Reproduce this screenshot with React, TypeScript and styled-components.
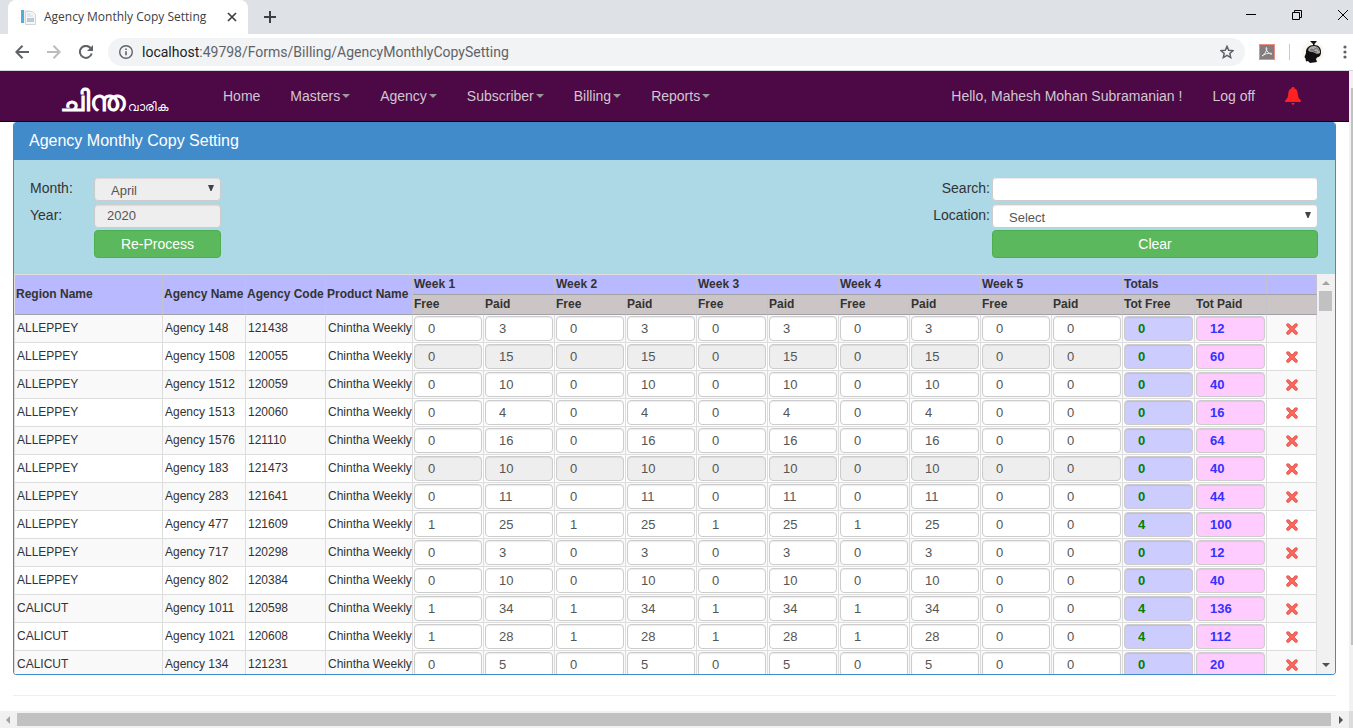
import React from "react";
import styled, { createGlobalStyle, css } from "styled-components";

const GlobalStyle = createGlobalStyle`
  *, *::before, *::after { box-sizing: border-box; }
  body { margin: 0; background: #fff; color: #333; font-family: "Liberation Sans", Arial, sans-serif; font-size: 14px; line-height: 20px; }
  button, input, select { font-family: inherit; margin: 0; }
  a { color: inherit; text-decoration: none; }
  svg { display: block; }
`;

const Window = styled.div`
  display: flex;
  flex-direction: column;
  min-height: 100vh;
`;

/* ---------- browser frame ---------- */

const TabStrip = styled.div`
  display: flex;
  height: 34px;
  padding-left: 8px;
  background: #dee1e6;
`;

const Tab = styled.div`
  display: flex;
  align-items: center;
  width: 240px;
  padding: 0 10px 0 12px;
  border-radius: 8px 8px 0 0;
  background: #fff;
  color: #3c4043;
  font: 12px/16px "Open Sans", "Noto Sans", sans-serif;
`;

const TabTitle = styled.span`
  flex: 1;
  padding-left: 8px;
  white-space: nowrap;
`;

const IconButton = styled.button<{ $w?: number }>`
  display: flex;
  align-items: center;
  justify-content: center;
  flex: none;
  width: ${(p) => p.$w ?? 32}px;
  padding: 0;
  border: 0;
  background: none;
`;

const WindowControls = styled.div`
  display: flex;
  margin-left: auto;
  padding-bottom: 4px;
`;

const CloseButton = styled(IconButton)`
  width: 33px;
  padding-left: 13px;
`;

const MenuButton = styled(IconButton)`
  width: 17px;
  margin-left: 12px;
`;

const Toolbar = styled.div`
  display: flex;
  align-items: center;
  height: 37px;
  padding-left: 6px;
  border-bottom: 1px solid #d5d7da;
  background: #fff;
`;

const AddressBar = styled.div`
  display: flex;
  flex: 1;
  align-items: center;
  height: 28px;
  margin-left: 6px;
  padding: 0 2px 0 10px;
  border-radius: 14px;
  background: #f1f3f4;
`;

const Url = styled.div`
  flex: 1;
  padding-left: 8px;
  color: #5f6368;
  font: 14px/20px Roboto, "Open Sans", sans-serif;
  white-space: nowrap;
  b { color: #202124; font-weight: 400; }
`;

const Extensions = styled.div`
  display: flex;
  align-items: center;
  padding-left: 14px;
`;

const Divider = styled.span`
  width: 1px;
  height: 16px;
  margin: 0 12px 0 14px;
  background: #ccc;
`;

/* ---------- page ---------- */

const Viewport = styled.div`
  display: flex;
  flex: 1;
`;

const Page = styled.div`
  flex: 1;
  min-width: 0;
`;

const Navbar = styled.nav`
  display: flex;
  align-items: center;
  height: 51px;
  padding: 0 33px 0 60px;
  border-bottom: 1px solid #000;
  background: #4d0846;
  color: #d2c6d0;
`;

const Brand = styled.a`
  display: flex;
  align-items: baseline;
  gap: 3px;
  width: 148px;
  padding-top: 16px;
  color: #fff;
  font-size: 12px;
  line-height: 28px;
  white-space: nowrap;
  strong { font-size: 28px; }
`;

const NavLink = styled.a`
  display: flex;
  align-items: center;
  padding: 0 15px;
  white-space: nowrap;
`;

const Caret = styled.span`
  margin-left: 2px;
  border: 4px solid transparent;
  border-top-color: #999;
  border-bottom: 0;
`;

const NavRight = styled.div`
  display: flex;
  align-items: center;
  margin-left: auto;
`;

const Main = styled.main`
  padding: 0 13px;
`;

const Panel = styled.section`
  overflow: hidden;
  border: 1px solid #428bca;
  border-top: 0;
  border-radius: 4px;
  background: #add8e6;
`;

const PanelTitle = styled.h1`
  margin: 0;
  height: 38px;
  padding: 9px 15px;
  background: #428bca;
  color: #fff;
  font-size: 16px;
  font-weight: 400;
  line-height: 20px;
`;

const Filters = styled.form`
  display: flex;
  justify-content: space-between;
  padding: 16px 17px 16px 16px;
`;

const FieldGrid = styled.div<{ $label: number; $field: number; $right?: boolean }>`
  display: grid;
  grid-template-columns: ${(p) => p.$label}px ${(p) => p.$field}px;
  grid-template-rows: 27px 27px 28px;
  ${(p) => p.$right && css`
    label { text-align: right; padding-right: 2px; }
  `}
`;

const Label = styled.label`
  padding-top: 2px;
`;

const field = css`
  display: block;
  width: 100%;
  height: 24px;
  border: 1px solid #ccc;
  border-radius: 4px;
  background: #fff;
  color: #555;
  font-size: 13px;
  line-height: 16px;
  box-shadow: inset 0 1px 1px rgba(0, 0, 0, 0.08);
  &:disabled { background: #eee; opacity: 1; }
`;

const TextInput = styled.input`
  ${field}
  margin-top: 1px;
  padding: 0 12px 2px;
`;

const SelectWrap = styled.div`
  position: relative;
  padding-top: 1px;
  svg { position: absolute; right: 7px; top: 9px; }
`;

const Select = styled.select`
  ${field}
  appearance: none;
  padding: 4px 12px 0 16px;
`;

const GreenButton = styled.button`
  grid-column: 2;
  height: 28px;
  padding: 0;
  border: 1px solid #4cae4c;
  border-radius: 4px;
  background: #5cb85c;
  color: #fff;
  font-size: 14px;
`;

const GridArea = styled.div`
  display: flex;
  height: 400px;
  background: #fff;
`;

const GridClip = styled.div`
  flex: 1;
  min-width: 0;
  padding-right: 1px;
  overflow: hidden;
  background: #f1f1f1;
`;

const Table = styled.table`
  width: 100%;
  table-layout: fixed;
  border-collapse: separate;
  border-spacing: 0;
  border-top: 1px solid #ddd;
  border-left: 1px solid #ddd;
  background: #fff;
  font-size: 12px;
  line-height: 16px;
`;

const HeadCell = styled.th<{ $sub?: boolean }>`
  height: 20px;
  padding: 0 1px 2px;
  border-right: 1px solid #c4c2cc;
  border-bottom: 1px solid #a3a1a8;
  background: ${(p) => (p.$sub ? "#cbc5c5" : "#b9b9ff")};
  text-align: left;
  white-space: nowrap;
`;

const Row = styled.tr`
  &:nth-child(odd) { background: #f9f9f9; }
`;

const Cell = styled.td<{ $text?: boolean }>`
  height: 28px;
  padding: ${(p) => (p.$text ? "0 0 1px 2px" : "1px")};
  border-right: 1px solid #ddd;
  border-bottom: 1px solid #ddd;
  white-space: nowrap;
`;

const tones = {
  plain: css``,
  free: css`background: #ccf; color: #008000; font-weight: 700;`,
  paid: css`background: #fcf; color: #33f; font-weight: 700;`,
};

const CellInput = styled.input<{ $tone?: keyof typeof tones }>`
  ${field}
  height: 25px;
  padding: 0 13px;
  ${(p) => tones[p.$tone ?? "plain"]}
`;

const Rule = styled.hr`
  height: 1px;
  margin: 20px 0 15px;
  border: 0;
  background: #eee;
`;

/* ---------- scroll bars ---------- */

const GridScroll = styled.div`
  display: flex;
  flex-direction: column;
  align-items: center;
  width: 17px;
  padding: 7px 3px 7px 1px;
  background: #f1f1f1;
`;

const GridThumb = styled.div`
  width: 13px;
  height: 20px;
  margin: 6px 0 auto;
  background: #c1c1c1;
`;

const PageScroll = styled.div`
  width: 4px;
  padding: 17px 0 66px 2px;
  background: #f1f1f1;
`;

const PageThumb = styled.div`
  height: 100%;
  background: #c1c1c1;
`;

const BottomScroll = styled.div`
  display: flex;
  align-items: center;
  height: 17px;
  padding-left: 6px;
  background: #f1f1f1;
`;

const BottomThumb = styled.div`
  flex: 1;
  height: 13px;
  margin: 0 8px 0 7px;
  background: #c1c1c1;
`;

const Corner = styled.div`
  width: 4px;
  height: 17px;
  margin-left: 6px;
  background: #dcdcdc;
`;

const Tri = styled.span<{ $dir: "up" | "down" | "left" | "right"; $color: string }>`
  border: 4px solid transparent;
  ${(p) => p.$dir === "up" && css`border-top: 0; border-bottom-color: ${p.$color};`}
  ${(p) => p.$dir === "down" && css`border-bottom: 0; border-top-color: ${p.$color};`}
  ${(p) => p.$dir === "left" && css`border-left: 0; border-right-color: ${p.$color};`}
  ${(p) => p.$dir === "right" && css`border-right: 0; border-left-color: ${p.$color};`}
`;

/* ---------- drawings ---------- */

const Favicon = () => (
  <svg width="16" height="16" viewBox="0 0 16 16" aria-hidden="true">
    <path d="M1 1h3v13H1z" fill="#5aa9d6" />
    <path d="M4 1h6v13H4z" fill="#e9eef2" />
    <path d="M5.500 2.500h7l3 3v10h-10z" fill="#f3f5f7" stroke="#d0d5da" />
    <path d="M7 5h4M7 7h6" stroke="#d5dadf" />
    <path d="M7 9h7v4H7z" fill="#bcc8d2" />
  </svg>
);

const Bell = () => (
  <svg width="16" height="18" viewBox="0 0 16 18" fill="#ff2020" aria-hidden="true">
    <path d="M8 0c1 0 1.500.600 1.600 1.400C12 2.200 12.700 4.500 12.800 7c.1 3 .7 4.500 3 6.200V15H.2v-1.800C2.500 11.500 3.100 10 3.200 7c.1-2.500.8-4.800 3.200-5.600C6.500.600 7 0 8 0z" />
    <path d="M6.500 16h3c-.1 1.200-.7 1.800-1.500 1.800S6.600 17.200 6.500 16z" />
  </svg>
);

const Cross = () => (
  <svg width="12" height="12" viewBox="0 0 12 12" strokeLinecap="round" aria-hidden="true">
    <path d="M2 2l8 8M10 2l-8 8" stroke="#e4493f" strokeWidth="3.400" />
    <path d="M2 2l8 8M10 2l-8 8" stroke="#fa6a60" strokeWidth="1.800" />
  </svg>
);

const SelectArrow = () => (
  <svg width="6" height="6" viewBox="0 0 6 6" aria-hidden="true">
    <path d="M0 0h6L3.500 6h-1z" fill="#444" />
  </svg>
);

const Profile = () => (
  <svg width="22" height="24" viewBox="0 0 22 24" aria-hidden="true">
    <circle cx="11" cy="12" r="11" fill="#fbf6f0" />
    <path d="M8 1h7l-2.500 3v2h-1.500V4z" fill="#111" />
    <path d="M4 13c-.5-5 3-8 8-8s7.500 3.500 7 8c-.3 3-2 4-4 4.500L14 19l1 3-7 1-2-2-2 .5-.5-3L2.500 17z" fill="#111" />
    <path d="M6 10c1-3 3-4 6-4 4 0 6 3 6 7-2 1.500-4 .5-5 0-2-1.500-5 0-7-3z" fill="#aaa" />
    <path d="M8 10c2-2 3 1 5-1s3 0 4 2M9 11c2-1 3 1 6 1" fill="none" stroke="#666" />
  </svg>
);

/* ---------- data ---------- */

type Agency = { region: string; name: string; code: string; free: number; paid: number; locked?: boolean };

const agencies: Agency[] = [
  { region: "ALLEPPEY", name: "Agency 148", code: "121438", free: 0, paid: 3 },
  { region: "ALLEPPEY", name: "Agency 1508", code: "120055", free: 0, paid: 15, locked: true },
  { region: "ALLEPPEY", name: "Agency 1512", code: "120059", free: 0, paid: 10 },
  { region: "ALLEPPEY", name: "Agency 1513", code: "120060", free: 0, paid: 4 },
  { region: "ALLEPPEY", name: "Agency 1576", code: "121110", free: 0, paid: 16 },
  { region: "ALLEPPEY", name: "Agency 183", code: "121473", free: 0, paid: 10, locked: true },
  { region: "ALLEPPEY", name: "Agency 283", code: "121641", free: 0, paid: 11 },
  { region: "ALLEPPEY", name: "Agency 477", code: "121609", free: 1, paid: 25 },
  { region: "ALLEPPEY", name: "Agency 717", code: "120298", free: 0, paid: 3 },
  { region: "ALLEPPEY", name: "Agency 802", code: "120384", free: 0, paid: 10 },
  { region: "CALICUT", name: "Agency 1011", code: "120598", free: 1, paid: 34 },
  { region: "CALICUT", name: "Agency 1021", code: "120608", free: 1, paid: 28 },
  { region: "CALICUT", name: "Agency 134", code: "121231", free: 0, paid: 5 },
];

const weeks = [1, 2, 3, 4, 5];
const menus = ["Masters", "Agency", "Subscriber", "Billing", "Reports"];

const AgencyRow = ({ a }: { a: Agency }) => (
  <Row>
    <Cell $text>{a.region}</Cell>
    <Cell $text>{a.name}</Cell>
    <Cell $text>{a.code}</Cell>
    <Cell $text>Chintha Weekly</Cell>
    {weeks.map((w) => (
      <React.Fragment key={w}>
        <Cell>
          <CellInput aria-label={`${a.name} week ${w} free`} disabled={a.locked} defaultValue={w < 5 ? a.free : 0} />
        </Cell>
        <Cell>
          <CellInput aria-label={`${a.name} week ${w} paid`} disabled={a.locked} defaultValue={w < 5 ? a.paid : 0} />
        </Cell>
      </React.Fragment>
    ))}
    <Cell>
      <CellInput $tone="free" readOnly aria-label={`${a.name} total free`} value={a.free * 4} />
    </Cell>
    <Cell>
      <CellInput $tone="paid" readOnly aria-label={`${a.name} total paid`} value={a.paid * 4} />
    </Cell>
    <Cell>
      <IconButton type="button" $w={47} aria-label={`Delete ${a.name}`}>
        <Cross />
      </IconButton>
    </Cell>
  </Row>
);

export default function App() {
  return (
    <Window>
      <GlobalStyle />
      <TabStrip>
        <Tab>
          <Favicon />
          <TabTitle>Agency Monthly Copy Setting</TabTitle>
          <IconButton $w={12} aria-label="Close tab">
            <svg width="10" height="10" viewBox="0 0 10 10" stroke="#3c4043" strokeWidth="1.700">
              <path d="M1 1l8 8M9 1l-8 8" />
            </svg>
          </IconButton>
        </Tab>
        <IconButton $w={43} aria-label="New tab">
          <svg width="12" height="12" viewBox="0 0 12 12" stroke="#3c4043" strokeWidth="2">
            <path d="M6 0v12M0 6h12" />
          </svg>
        </IconButton>
        <WindowControls>
          <IconButton $w={46} aria-label="Minimize">
            <svg width="10" height="10" viewBox="0 0 10 10" stroke="#000">
              <path d="M0 4.500h10" />
            </svg>
          </IconButton>
          <IconButton $w={46} aria-label="Restore">
            <svg width="10" height="10" viewBox="0 0 10 10" stroke="#000" fill="none">
              <path d="M.5 2.500h7v7h-7zM2.500 2.500v-2h7v7h-2" />
            </svg>
          </IconButton>
          <CloseButton aria-label="Close">
            <svg width="10" height="10" viewBox="0 0 10 10" stroke="#000">
              <path d="M0 0l10 10M10 0L0 10" />
            </svg>
          </CloseButton>
        </WindowControls>
      </TabStrip>
      <Toolbar>
        <IconButton aria-label="Back">
          <svg width="14" height="14" viewBox="0 0 14 14" stroke="#5f6368" strokeWidth="2" fill="none">
            <path d="M14 7H1.500M7.500 .8L1.300 7l6.200 6.200" />
          </svg>
        </IconButton>
        <IconButton aria-label="Forward">
          <svg width="14" height="14" viewBox="0 0 14 14" stroke="#babcbe" strokeWidth="2" fill="none">
            <path d="M0 7h12.500M6.500 .8L12.700 7l-6.200 6.200" />
          </svg>
        </IconButton>
        <IconButton aria-label="Reload">
          <svg width="14" height="14" viewBox="0 0 14 14" stroke="#5f6368" strokeWidth="2" fill="none">
            <path d="M12.700 8.500A6 6 0 1 1 11.500 3" />
            <path d="M14 0v6H8z" fill="#5f6368" stroke="none" />
          </svg>
        </IconButton>
        <AddressBar>
          <svg width="16" height="16" viewBox="0 0 16 16" aria-hidden="true">
            <circle cx="8" cy="8" r="6.300" fill="none" stroke="#5f6368" strokeWidth="1.400" />
            <path d="M7.200 7.200h1.600v4H7.200zM7.200 4.500h1.600v1.600H7.200z" fill="#5f6368" />
          </svg>
          <Url>
            <b>localhost</b>:49798/Forms/Billing/AgencyMonthlyCopySetting
          </Url>
          <IconButton aria-label="Bookmark">
            <svg width="14" height="14" viewBox="0 0 14 14" fill="none" stroke="#5f6368" strokeWidth="1.500">
              <path d="M7 1.300l1.700 3.900 4.300.4-3.200 2.800.9 4.200L7 10.400l-3.700 2.200.9-4.200L1 5.600l4.300-.4z" />
            </svg>
          </IconButton>
        </AddressBar>
        <Extensions>
          <IconButton $w={16} aria-label="PDF tools">
            <svg width="16" height="16" viewBox="0 0 16 16">
              <rect x=".5" y=".5" width="15" height="15" fill="#857c80" stroke="#ee8d80" />
              <path d="M3 12c2-1 4.500-4 5-8-1-1.500-1.500.5 0 3 1.500 2 3 3.500 5 3-.5-1.500-6-1-10 2z" fill="none" stroke="#eee" />
            </svg>
          </IconButton>
          <Divider />
          <IconButton $w={22} aria-label="Profile">
            <Profile />
          </IconButton>
          <MenuButton aria-label="Menu">
            <svg width="4" height="14" viewBox="0 0 4 14" fill="#5f6368">
              <circle cx="2" cy="2" r="1.600" />
              <circle cx="2" cy="7" r="1.600" />
              <circle cx="2" cy="12" r="1.600" />
            </svg>
          </MenuButton>
        </Extensions>
      </Toolbar>

      <Viewport>
        <Page>
          <Navbar>
            <Brand href="#" lang="ml">
              <strong>ചിന്ത</strong>
              <span>വാരിക</span>
            </Brand>
            <NavLink href="#">Home</NavLink>
            {menus.map((m) => (
              <NavLink key={m} href="#">
                {m}
                <Caret />
              </NavLink>
            ))}
            <NavRight>
              <NavLink href="#">Hello, Mahesh Mohan Subramanian !</NavLink>
              <NavLink href="#">Log off</NavLink>
              <NavLink href="#" aria-label="Notifications">
                <Bell />
              </NavLink>
            </NavRight>
          </Navbar>

          <Main>
            <Panel>
              <PanelTitle>Agency Monthly Copy Setting</PanelTitle>
              <Filters>
                <FieldGrid $label={64} $field={127}>
                  <Label htmlFor="month">Month:</Label>
                  <SelectWrap>
                    <Select id="month" disabled defaultValue="April">
                      <option>April</option>
                    </Select>
                    <SelectArrow />
                  </SelectWrap>
                  <Label htmlFor="year">Year:</Label>
                  <TextInput id="year" disabled defaultValue="2020" />
                  <GreenButton type="button">Re-Process</GreenButton>
                </FieldGrid>
                <FieldGrid $label={64} $field={326} $right>
                  <Label htmlFor="search">Search:</Label>
                  <TextInput id="search" />
                  <Label htmlFor="location">Location:</Label>
                  <SelectWrap>
                    <Select id="location" defaultValue="Select">
                      <option>Select</option>
                    </Select>
                    <SelectArrow />
                  </SelectWrap>
                  <GreenButton type="button">Clear</GreenButton>
                </FieldGrid>
              </Filters>
              <GridArea>
                <GridClip>
                  <Table>
                    <colgroup>
                      <col />
                      <col width="83" />
                      <col width="80" />
                      <col width="87" />
                      {weeks.map((w) => (
                        <React.Fragment key={w}>
                          <col width="71" />
                          <col width="71" />
                        </React.Fragment>
                      ))}
                      <col width="72" />
                      <col width="72" />
                      <col width="50" />
                    </colgroup>
                    <thead>
                      <tr>
                        <HeadCell rowSpan={2}>Region Name</HeadCell>
                        <HeadCell rowSpan={2}>Agency Name</HeadCell>
                        <HeadCell rowSpan={2}>Agency Code</HeadCell>
                        <HeadCell rowSpan={2}>Product Name</HeadCell>
                        {weeks.map((w) => (
                          <HeadCell key={w} colSpan={2}>
                            Week {w}
                          </HeadCell>
                        ))}
                        <HeadCell colSpan={2}>Totals</HeadCell>
                        <HeadCell />
                      </tr>
                      <tr>
                        {weeks.map((w) => (
                          <React.Fragment key={w}>
                            <HeadCell $sub>Free</HeadCell>
                            <HeadCell $sub>Paid</HeadCell>
                          </React.Fragment>
                        ))}
                        <HeadCell $sub>Tot Free</HeadCell>
                        <HeadCell $sub>Tot Paid</HeadCell>
                        <HeadCell $sub />
                      </tr>
                    </thead>
                    <tbody>
                      {agencies.map((a) => (
                        <AgencyRow key={a.code} a={a} />
                      ))}
                    </tbody>
                  </Table>
                </GridClip>
                <GridScroll>
                  <Tri $dir="up" $color="#a3a3a3" />
                  <GridThumb />
                  <Tri $dir="down" $color="#505050" />
                </GridScroll>
              </GridArea>
            </Panel>
            <Rule />
          </Main>
        </Page>
        <PageScroll>
          <PageThumb />
        </PageScroll>
      </Viewport>
      <BottomScroll>
        <Tri $dir="left" $color="#a3a3a3" />
        <BottomThumb />
        <Tri $dir="right" $color="#505050" />
        <Corner />
      </BottomScroll>
    </Window>
  );
}
